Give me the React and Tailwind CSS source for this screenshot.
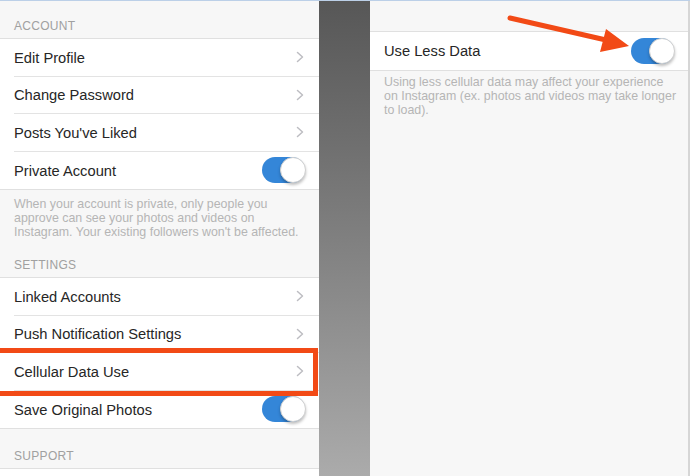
import React from 'react';

const font = { fontFamily: '"Liberation Sans", Arial, sans-serif' };

function Chevron() {
    return (
        <svg width="8" height="12" viewBox="0 0 8 12" className="shrink-0">
            <path d="M1.5 1.5l5 4.5-5 4.5" fill="none" stroke="#bdbdc2" strokeWidth="1.5" strokeLinecap="round" strokeLinejoin="round" />
        </svg>
    );
}

function Toggle() {
    return (
        <div className="relative w-[43px] h-[26px] rounded-full bg-[#3486d8] shrink-0">
            <div className="absolute right-[-1px] top-0 w-[26px] h-[26px] rounded-full bg-white border border-[#d0d0d0] shadow-[0_2px_3px_rgba(0,0,0,0.25)]" />
        </div>
    );
}

function Row({ label, toggle, last }) {
    return (
        <div className="bg-white pl-[14px]">
            <div className={`h-[37.5px] flex items-center justify-between pr-[14px] ${last ? '' : 'border-b border-[#e3e3e3]'}`}>
                <span className="text-[14.7px] text-[#262626] pt-[1px]">{label}</span>
                {toggle ? <Toggle /> : <span className="pr-[1px]"><Chevron /></span>}
            </div>
        </div>
    );
}

function Header({ children, top }) {
    return (
        <div className={`px-[14px] ${top} pb-[5px] text-[12px] leading-[14px] tracking-[0.3px] text-[#a0a0a0]`}>
            {children}
        </div>
    );
}

export default function App() {
    return (
        <div className="w-[690px] h-[476px] flex overflow-hidden border-t border-[#bcd0e8]" style={font}>
            {/* Left settings panel */}
            <div className="w-[319px] h-full bg-[#f7f7f7] flex flex-col">
                <Header top="pt-[18px]">ACCOUNT</Header>
                <div className="border-y border-[#e0e0e0]">
                    <Row label="Edit Profile" />
                    <Row label="Change Password" />
                    <Row label="Posts You've Liked" />
                    <Row label="Private Account" toggle last />
                </div>
                <p className="px-[14px] pt-[7px] text-[12.4px] leading-[14px] text-[#b5b5b5]">
                    When your account is private, only people you approve can see your photos and videos on Instagram. Your existing followers won't be affected.
                </p>
                <Header top="pt-[19px]">SETTINGS</Header>
                <div className="border-y border-[#e0e0e0]">
                    <Row label="Linked Accounts" />
                    <Row label="Push Notification Settings" />
                    <div className="relative">
                        <Row label="Cellular Data Use" />
                        <div className="absolute left-[-6px] right-[1px] top-[-5px] bottom-[-5px] border-[5px] border-[#f24a16]" />
                    </div>
                    <Row label="Save Original Photos" toggle last />
                </div>
                <Header top="pt-[20px]">SUPPORT</Header>
                <div className="flex-1 bg-white border-t border-[#e0e0e0]" />
            </div>

            {/* Gap */}
            <div className="w-[51px] h-full bg-gradient-to-b from-[#575757] to-[#ababab]" />

            {/* Right panel */}
            <div className="relative flex-1 h-full bg-[#f7f7f7] border-r-2 border-[#d6d6d6]">
                <div className="h-[30px]" />
                <div className="border-y border-[#e0e0e0]">
                    <Row label="Use Less Data" toggle last />
                </div>
                <p className="pl-[14px] pt-[4px] text-[12.4px] leading-[14px] text-[#b5b5b5] whitespace-nowrap">
                    Using less cellular data may affect your experience<br />
                    on Instagram (ex. photos and videos may take longer<br />
                    to load).
                </p>
                <svg className="absolute left-0 top-0" width="320" height="80" viewBox="370 0 320 80">
                    <line x1="510" y1="17" x2="606" y2="39" stroke="#f24a16" strokeWidth="5" strokeLinecap="round" />
                    <polygon points="629,45 600,51 606,28" fill="#f24a16" />
                </svg>
            </div>
        </div>
    );
}
